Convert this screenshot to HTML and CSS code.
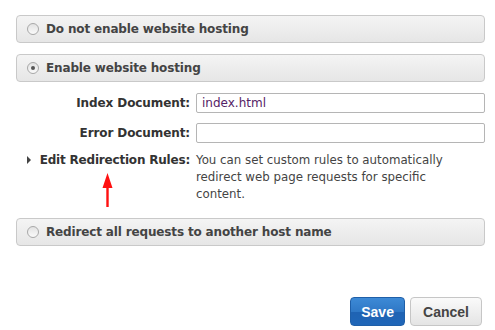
FILE: index.html
```html
<!DOCTYPE html>
<html>
<head>
<meta charset="utf-8">
<link rel="stylesheet" href="styles.css">
</head>
<body>
<div class="page">
  <div class="panel">
    <span class="radio"></span>
    <span class="panel-title">Do not enable website hosting</span>
  </div>
  <div class="panel">
    <span class="radio checked"></span>
    <span class="panel-title">Enable website hosting</span>
  </div>
  <div class="form">
    <div class="row">
      <label class="label">Index Document:</label>
      <div class="field"><input class="input" type="text" value="index.html"></div>
    </div>
    <div class="row">
      <label class="label">Error Document:</label>
      <div class="field"><input class="input" type="text" value=""></div>
    </div>
    <div class="row rules">
      <label class="label tight"><span class="tri"></span>Edit Redirection Rules:</label>
      <div class="field desc">You can set custom rules to automatically redirect web page requests for specific content.
        <span class="arrow">
          <svg width="11" height="34" viewBox="0 0 11 34"><path d="M5.5 0 L10.5 15 L6.7 15 L6.7 34 L4.3 34 L4.3 15 L0.5 15 Z" fill="#ff1010"/></svg>
        </span>
      </div>
    </div>
  </div>
  <div class="panel">
    <span class="radio"></span>
    <span class="panel-title">Redirect all requests to another host name</span>
  </div>
  <div class="actions">
    <button class="btn primary">Save</button>
    <button class="btn">Cancel</button>
  </div>
</div>
</body>
</html>
```
FILE: styles.css
```css
html, body {
  margin: 0;
  padding: 0;
  background: #fff;
}
.page {
  padding: 15px 10px 0 16px;
  font-family: "DejaVu Sans", Verdana, sans-serif;
  color: #333;
}
.panel {
  height: 26px;
  border: 1px solid #c9c9c9;
  border-radius: 4px;
  background: linear-gradient(#f4f4f4, #e6e6e6);
  display: flex;
  align-items: center;
  padding-left: 10px;
  margin-bottom: 11px;
}
.radio {
  width: 10px;
  height: 10px;
  border: 1px solid #a8a8a8;
  border-radius: 50%;
  background: linear-gradient(#e2e2e2, #fafafa);
  margin-right: 7px;
  position: relative;
}
.radio.checked::after {
  content: "";
  position: absolute;
  left: 3px;
  top: 3px;
  width: 4px;
  height: 4px;
  border-radius: 50%;
  background: #555;
}
.panel-title {
  font-weight: bold;
  font-size: 12px;
  color: #444;
  letter-spacing: -0.15px;
}
.form {
  padding: 0 0 15px 0;
}
.row {
  display: flex;
  align-items: center;
  margin-bottom: 10px;
}
.label {
  width: 174px;
  text-align: right;
  font-weight: bold;
  font-size: 12px;
  color: #333;
  padding-right: 6px;
  letter-spacing: -0.1px;
}
.label.tight {
  letter-spacing: -0.2px;
}
.field {
  flex: 1;
}
.input {
  box-sizing: border-box;
  width: 289px;
  height: 20px;
  border: 1px solid #b5b5b5;
  border-radius: 2px;
  padding: 0 5px;
  font-family: "DejaVu Sans", Verdana, sans-serif;
  font-size: 12px;
  color: #552266;
  display: block;
}
.rules {
  align-items: flex-start;
  margin-top: 9px;
  margin-bottom: 0;
}
.tri {
  display: inline-block;
  width: 0;
  height: 0;
  border-top: 4px solid transparent;
  border-bottom: 4px solid transparent;
  border-left: 4px solid #444;
  margin-right: 9px;
  vertical-align: 0;
}
.desc {
  font-size: 11.8px;
  line-height: 17px;
  color: #444;
  width: 270px;
  flex: none;
  margin-top: -1px;
  position: relative;
}
.arrow {
  position: absolute;
  left: -94px;
  top: 21px;
  line-height: 0;
}
.actions {
  display: flex;
  justify-content: flex-end;
  gap: 5px;
  padding-right: 3px;
  margin-top: 51px;
}
.btn {
  font-family: "Liberation Sans", Arial, sans-serif;
  font-weight: bold;
  font-size: 14px;
  height: 29px;
  padding: 0 12px;
  border-radius: 4px;
  border: 1px solid #c6c6c6;
  background: linear-gradient(#fafafa, #e4e4e4);
  color: #444;
}
.btn.primary {
  border-color: #1f5fa8;
  background: linear-gradient(#3d8ad6 0%, #2f78c6 50%, #1f63b3 51%, #1f66b8 100%);
  color: #fff;
  width: 55px;
  padding: 0;
}
```
